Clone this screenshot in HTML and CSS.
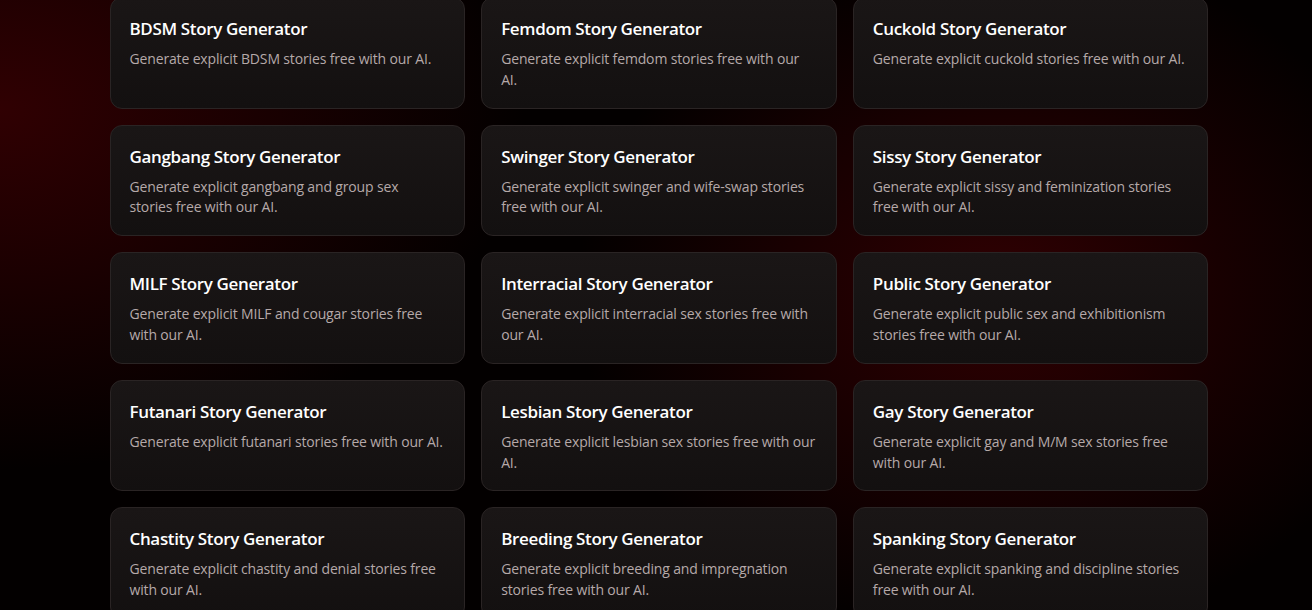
FILE: index.html
```html
<!DOCTYPE html>
<html lang="en">
<head>
  <meta charset="UTF-8" />
  <meta name="viewport" content="width=device-width, initial-scale=1.0" />
  <title>Story Generators</title>
  <link rel="stylesheet" href="styles.css">
</head>
<body>
  <main class="generators">
    <a class="card" href="#">
      <h3>BDSM Story Generator</h3>
      <p>Generate explicit BDSM stories free with our AI.</p>
    </a>
    <a class="card" href="#">
      <h3>Femdom Story Generator</h3>
      <p>Generate explicit femdom stories free with our AI.</p>
    </a>
    <a class="card" href="#">
      <h3>Cuckold Story Generator</h3>
      <p>Generate explicit cuckold stories free with our AI.</p>
    </a>
    <a class="card" href="#">
      <h3>Gangbang Story Generator</h3>
      <p>Generate explicit gangbang and group sex stories free with our AI.</p>
    </a>
    <a class="card" href="#">
      <h3>Swinger Story Generator</h3>
      <p>Generate explicit swinger and wife-swap stories free with our AI.</p>
    </a>
    <a class="card" href="#">
      <h3>Sissy Story Generator</h3>
      <p>Generate explicit sissy and feminization stories free with our AI.</p>
    </a>
    <a class="card" href="#">
      <h3>MILF Story Generator</h3>
      <p>Generate explicit MILF and cougar stories free with our AI.</p>
    </a>
    <a class="card" href="#">
      <h3>Interracial Story Generator</h3>
      <p>Generate explicit interracial sex stories free with our AI.</p>
    </a>
    <a class="card" href="#">
      <h3>Public Story Generator</h3>
      <p>Generate explicit public sex and exhibitionism stories free with our AI.</p>
    </a>
    <a class="card" href="#">
      <h3>Futanari Story Generator</h3>
      <p>Generate explicit futanari stories free with our AI.</p>
    </a>
    <a class="card" href="#">
      <h3>Lesbian Story Generator</h3>
      <p>Generate explicit lesbian sex stories free with our AI.</p>
    </a>
    <a class="card" href="#">
      <h3>Gay Story Generator</h3>
      <p>Generate explicit gay and M/M sex stories free with our AI.</p>
    </a>
    <a class="card" href="#">
      <h3>Chastity Story Generator</h3>
      <p>Generate explicit chastity and denial stories free with our AI.</p>
    </a>
    <a class="card" href="#">
      <h3>Breeding Story Generator</h3>
      <p>Generate explicit breeding and impregnation stories free with our AI.</p>
    </a>
    <a class="card" href="#">
      <h3>Spanking Story Generator</h3>
      <p>Generate explicit spanking and discipline stories free with our AI.</p>
    </a>
  </main>
</body>
</html>
```

FILE: styles.css
```css
:root {
  --bg: #030000;
  --glow: rgba(48, 0, 2, 1);
  --card-top: #1a1616;
  --card-bottom: #131010;
  --card-border: #2a2424;
  --title: #ffffff;
  --muted: #b5a9a9;
}

html, body {
  height: 100%;
}

body {
  margin: 0;
  overflow: hidden;
  padding-left: 6px;
  font-family: "Open Sans", "Noto Sans", sans-serif;
  background-color: var(--bg);
  background-image:
    radial-gradient(ellipse 700px 480px at 0% 18%, var(--glow), transparent 75%),
    radial-gradient(ellipse 560px 460px at 76% 48%, var(--glow), transparent 75%);
}

.generators {
  max-width: 1099px;
  margin: -3px auto 0;
  display: grid;
  grid-template-columns: repeat(3, 1fr);
  gap: 16px;
}

.card {
  display: block;
  padding: 19px 20.5px 17px 19px;
  border: 1px solid var(--card-border);
  border-radius: 12px;
  background: linear-gradient(180deg, var(--card-top), var(--card-bottom));
  text-decoration: none;
}

.card h3 {
  margin: 0 0 8px;
  font-size: 17px;
  font-weight: 600;
  line-height: 24px;
  letter-spacing: -0.35px;
  color: var(--title);
}

.card p {
  margin: 0;
  font-size: 14px;
  line-height: 20.8px;
  letter-spacing: -0.15px;
  color: var(--muted);
}
```
